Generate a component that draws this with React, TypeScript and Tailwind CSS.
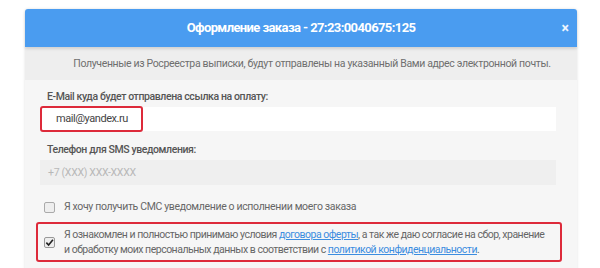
import React from 'react';

const App: React.FC = () => {
  return (
    <div
      className="w-[600px] h-[268px] bg-white overflow-hidden pt-[9px] pl-[25px]"
      style={{ fontFamily: 'Roboto, "Liberation Sans", sans-serif' }}
    >
      <div className="w-[552px] h-[300px] rounded-t-[3px] bg-[#f6f6f6] shadow-[0_0_3px_rgba(0,0,0,0.12)]">
        {/* Header */}
        <div className="relative h-[38px] bg-[#4a9cf0] rounded-t-[3px] flex items-center justify-center shadow-[0_2px_3px_rgba(0,0,0,0.12)]">
          <span className="text-white font-bold text-[13px] tracking-[-0.6px]">
            Оформление заказа - 27:23:0040675:125
          </span>
          <span className="absolute right-[8px] top-[9px] text-white/90 font-bold text-[14px]">×</span>
        </div>

        {/* Notice */}
        <div className="h-[33px] bg-[#eeeeee] flex items-center justify-center pl-[22px]">
          <span className="text-[#6f6f6f] text-[10.5px] tracking-[-0.35px]">
            Полученные из Росреестра выписки, будут отправлены на указанный Вами адрес электронной почты.
          </span>
        </div>

        {/* Form */}
        <div className="pl-[15px] pr-[21px] pt-[10px]">
          <div className="pl-[7px] h-[14px] leading-[14px] text-[10.5px] font-medium text-[#555] tracking-[-0.4px] mb-[3px]">
            E-Mail куда будет отправлена ссылка на оплату:
          </div>
          <div className="relative h-[24px] bg-white flex items-center pl-[16px]">
            <span className="text-[11px] text-[#444] tracking-[-0.45px]">mail@yandex.ru</span>
            <div className="absolute left-0 top-[-1px] w-[103px] h-[26px] border-2 border-[#dd2a3a] rounded-[3px]" />
          </div>

          <div className="pl-[7px] mt-[12px] h-[14px] leading-[14px] text-[10.5px] font-medium text-[#555] tracking-[-0.4px] mb-[3px]">
            Телефон для SMS уведомления:
          </div>
          <div className="h-[25px] bg-[#efefef] flex items-center pl-[8px]">
            <span className="text-[10.5px] text-[#b8b8b8] tracking-[-0.3px]">+7 (XXX) XXX-XXXX</span>
          </div>

          <div className="flex items-center h-[14px] gap-[9px] pl-[4px] mt-[15px]">
            <span className="shrink-0 w-[11px] h-[11px] border border-[#aaa] rounded-[2px] bg-[#eee]" />
            <span className="text-[10.5px] text-[#666] tracking-[-0.35px]">
              Я хочу получить СМС уведомление о исполнении моего заказа
            </span>
          </div>

          <div className="mt-[8px] ml-[-4px] w-[526px] h-[40px] border-2 border-[#dd2a3a] rounded-[3px] flex items-center gap-[9px] pl-[6px] pr-[1px]">
            <span className="shrink-0 w-[11px] h-[11px] border border-[#999] rounded-[2px] bg-[#eee] flex items-center justify-center">
              <svg viewBox="0 0 10 10" className="w-[9px] h-[9px]">
                <path d="M1.5 5.2 L4 7.8 L8.8 2" fill="none" stroke="#222" strokeWidth="1.8" />
              </svg>
            </span>
            <span className="text-[10.5px] leading-[15px] text-[#666] tracking-[-0.5px] whitespace-nowrap">
              Я ознакомлен и полностью принимаю условия{' '}
              <a className="text-[#3c8de0] underline">договора оферты</a>, а так же даю согласие на сбор, хранение
              <br />и обработку моих персональных данных в соответствии с{' '}
              <a className="text-[#3c8de0] underline">политикой конфиденциальности</a>.
            </span>
          </div>
        </div>
      </div>
    </div>
  );
};

export default App;
